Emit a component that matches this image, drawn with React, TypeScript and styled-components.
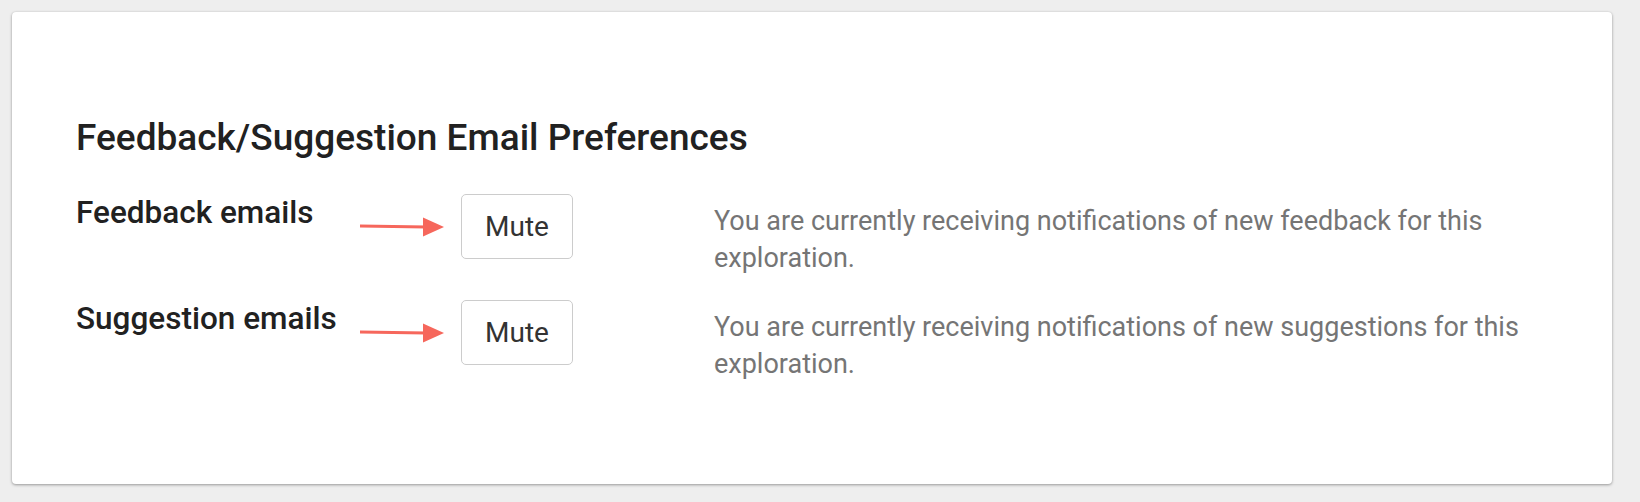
import React from "react";
import styled, { createGlobalStyle } from "styled-components";

const GlobalStyle = createGlobalStyle`
  html, body {
    margin: 0;
    padding: 0;
    background: #eeeeee;
    font-family: Roboto, "Noto Sans", "Liberation Sans", sans-serif;
  }
  * { box-sizing: border-box; }
`;

const Page = styled.div`
  padding: 12px 28px 19px 12px;
`;

const Card = styled.section`
  background: #ffffff;
  border-radius: 4px;
  box-shadow: 0 1px 3px rgba(0, 0, 0, 0.35), 0 0 2px rgba(0, 0, 0, 0.08);
  padding: 105px 40px 101px 64px;
  min-height: 471px;
`;

const Title = styled.h3`
  margin: 0 0 35px 0;
  font-size: 37px;
  line-height: 42px;
  font-weight: 500;
  color: #212121;
`;

const Rows = styled.div`
  display: flex;
  flex-direction: column;
  gap: 23px;
`;

const Row = styled.div`
  display: flex;
  align-items: flex-start;
`;

const Label = styled.div`
  width: 284px;
  font-size: 31.5px;
  line-height: 38px;
  font-weight: 500;
  color: #212121;
  white-space: nowrap;
`;

const ArrowSlot = styled.div`
  width: 101px;
  height: 65px;
  display: flex;
  align-items: center;
`;

const MuteButton = styled.button`
  width: 112px;
  height: 65px;
  border: 1.5px solid #cccccc;
  border-radius: 5px;
  background: #ffffff;
  font-family: Roboto, "Noto Sans", "Liberation Sans", sans-serif;
  font-size: 28px;
  font-weight: 400;
  color: #333333;
  padding: 0;
  display: flex;
  align-items: center;
  justify-content: center;
  cursor: pointer;
`;

const Description = styled.p`
  margin: 9px 0 0 141px;
  width: 820px;
  font-size: 27px;
  line-height: 37px;
  color: #757575;
`;

const Arrow: React.FC = () => (
  <svg width="84" height="24" viewBox="0 0 84 24">
    <line x1="0" y1="11" x2="66" y2="12" stroke="#f6675c" strokeWidth="3" />
    <polygon points="63,2.5 84,12 63,21.5" fill="#f6675c" />
  </svg>
);

const prefs = [
  { label: "Feedback emails", kind: "feedback" },
  { label: "Suggestion emails", kind: "suggestions" },
];

export default function App() {
  return (
    <>
      <GlobalStyle />
      <Page>
        <Card>
          <Title>Feedback/Suggestion Email Preferences</Title>
          <Rows>
            {prefs.map((p) => (
              <Row key={p.kind}>
                <Label>{p.label}</Label>
                <ArrowSlot>
                  <Arrow />
                </ArrowSlot>
                <MuteButton>Mute</MuteButton>
                <Description>
                  You are currently receiving notifications of new {p.kind} for this
                  exploration.
                </Description>
              </Row>
            ))}
          </Rows>
        </Card>
      </Page>
    </>
  );
}
